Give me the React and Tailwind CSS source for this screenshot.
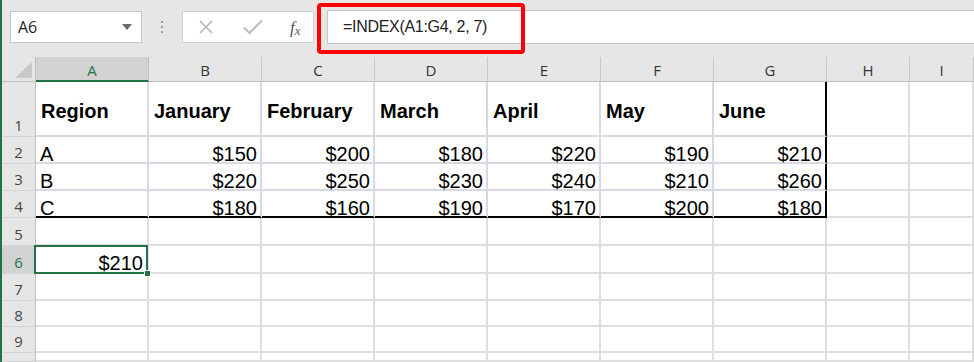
import React from "react";

const cols = ["A", "B", "C", "D", "E", "F", "G", "H", "I"];

const data = [
    ["Region", "January", "February", "March", "April", "May", "June"],
    ["A", "$150", "$200", "$180", "$220", "$190", "$210"],
    ["B", "$220", "$250", "$230", "$240", "$210", "$260"],
    ["C", "$180", "$160", "$190", "$170", "$200", "$180"],
];

const rowNums = [1, 2, 3, 4, 5, 6, 7, 8, 9, 10];

function RowHeader({ n }) {
    const selected = n === 6;
    return (
        <div className={`flex items-end justify-center pb-[3px] border-r border-b border-r-[#bfbfbf] border-b-[#d4d4d4] text-[15px] leading-[15px] ${selected ? "bg-[#d2d2d2] text-[#217346]" : "bg-[#e6e6e6] text-[#444]"}`}
            style={{ fontFamily: "'Open Sans', sans-serif" }}>
            {/* row 10 is cut off by the window edge */}
            {n < 10 ? n : ""}
        </div>
    );
}

function Cell({ row, col }) {
    // row: 1-based, col: 0-based
    const inTable = row <= 4 && col <= 6;
    const value = inTable ? data[row - 1][col] : null;
    const isHeader = row === 1 && inTable;
    const rightThick = inTable && col === 6;
    const bottomThick = row === 4 && col <= 6;

    let border = "border-r-2 border-b-2 border-r-[#dedede] border-b-[#dedede]";
    if (inTable) border = "border-r-2 border-b-2 border-r-[#d9d9e4] border-b-[#d9d9e4]";
    if (rightThick) border = "border-r-2 border-b-2 border-r-black border-b-[#d9d9e4]";
    if (bottomThick) border = rightThick
        ? "border-r-2 border-b-2 border-r-black border-b-black"
        : "border-r-2 border-b-2 border-r-[#d9d9e4] border-b-black";

    if (row === 6 && col === 0) {
        return (
            <div className={`relative bg-white ${border} flex justify-end pt-[7px] pr-[4px] text-[20px] leading-[20px] text-black`}>
                <span>$210</span>
                <div className="absolute -left-[2px] -top-[1px] -right-[1px] -bottom-[2px] border-2 border-[#217346] z-10" />
                <div className="absolute -right-[4px] -bottom-[5px] w-[7px] h-[7px] bg-[#217346] border border-white z-20" />
            </div>
        );
    }

    if (isHeader) {
        return (
            <div className={`bg-white ${border} pt-[18px] pl-[5px] text-[20px] leading-[23px] font-bold text-black`}>
                {value}
            </div>
        );
    }

    if (inTable) {
        return (
            <div className={`bg-white ${border} flex pt-[7px] text-[20px] leading-[20px] text-black ${col === 0 ? "justify-start pl-[4px]" : "justify-end pr-[3px]"}`}>
                {value}
            </div>
        );
    }

    return <div className={`bg-white ${border}`} />;
}

export default function App() {
    return (
        <div className="w-[974px] h-[362px] overflow-hidden flex bg-white"
            style={{ fontFamily: "'Liberation Sans', Arial, sans-serif" }}>
            {/* window edge */}
            <div className="w-[2px] h-full bg-[#217346] flex-shrink-0" />

            <div className="flex-1 flex flex-col min-w-0">
                {/* Formula bar */}
                <div className="relative h-[57px] flex items-start pt-[11px] bg-[#e6e6e6] flex-shrink-0">
                    <div className="ml-[8px] w-[132px] h-[32px] bg-white border border-[#c6c6c6] flex items-center justify-between pl-[7px] pr-[9px]">
                        <span className="text-[16px] text-[#1e1e1e]" style={{ fontFamily: "'Open Sans', sans-serif" }}>A6</span>
                        <svg width="10" height="6" viewBox="0 0 10 6">
                            <path d="M0 0 L10 0 L5 6 Z" fill="#6b6b6b" />
                        </svg>
                    </div>

                    <div className="w-[40px] h-[32px] flex flex-col items-center justify-center gap-[3px]">
                        <div className="w-[2px] h-[2px] bg-[#a0a0a0]" />
                        <div className="w-[2px] h-[2px] bg-[#a0a0a0]" />
                        <div className="w-[2px] h-[2px] bg-[#a0a0a0]" />
                    </div>

                    <div className="w-[132px] h-[32px] bg-white border border-[#d0d0d0] flex items-center pl-[15px]">
                        <svg width="16" height="16" viewBox="0 0 16 16">
                            <path d="M2 2 L14 14 M14 2 L2 14" stroke="#b4b4b4" strokeWidth="1.6" fill="none" />
                        </svg>
                        <svg width="20" height="16" viewBox="0 0 20 16" className="ml-[29px]">
                            <path d="M1 8.5 L6.5 14 L19 1.5" stroke="#bcbcbc" strokeWidth="2" fill="none" />
                        </svg>
                        <span className="ml-[27px] text-[17px] italic text-[#555] leading-none"
                            style={{ fontFamily: "'Liberation Serif', serif" }}>
                            f<span className="text-[13px] relative top-[2px]">x</span>
                        </span>
                    </div>

                    <div className="ml-[13px] -mt-[1px] flex-1 h-[34px] bg-white border-t border-b border-l border-[#c6c6c6] flex items-center pl-[15px]">
                        <span className="text-[16px] tracking-[-0.3px] text-[#222]">=INDEX(A1:G4, 2, 7)</span>
                    </div>

                    {/* highlight around the formula */}
                    <div className="absolute left-[315px] top-[3px] w-[208px] h-[51px] border-4 border-[#ff0000] rounded-[4px] pointer-events-none" />
                </div>

                {/* Grid */}
                <div className="flex-1 grid grid-cols-[34px_repeat(7,113px)_83px_1fr] grid-rows-[25px_55px_27px_27px_27px_28px_28px_27px_26px_26px_1fr]">
                    {/* corner */}
                    <div className="relative bg-[#e6e6e6] border-r border-b border-r-[#bfbfbf] border-b-[#bfbfbf]">
                        <svg width="17" height="16" viewBox="0 0 17 16" className="absolute right-[3px] bottom-[3px]">
                            <path d="M17 0 L17 16 L0 16 Z" fill="#c8c8c8" />
                        </svg>
                    </div>
                    {cols.map((c, i) => (
                        <div key={c}
                            className={`flex items-center justify-center pt-[3px] text-[15px] border-r ${i === 0 ? "bg-[#d2d2d2] text-[#217346] border-b-2 border-b-[#217346] border-r-[#bfbfbf]" : "bg-[#e6e6e6] text-[#333] border-b border-b-[#bfbfbf] border-r-[#c8c8c8]"}`}
                            style={{ fontFamily: "'Open Sans', sans-serif" }}>
                            {c}
                        </div>
                    ))}

                    {rowNums.map((n) => (
                        <React.Fragment key={n}>
                            <RowHeader n={n} />
                            {cols.map((c, i) => (
                                <Cell key={c} row={n} col={i} />
                            ))}
                        </React.Fragment>
                    ))}
                </div>
            </div>
        </div>
    );
}
